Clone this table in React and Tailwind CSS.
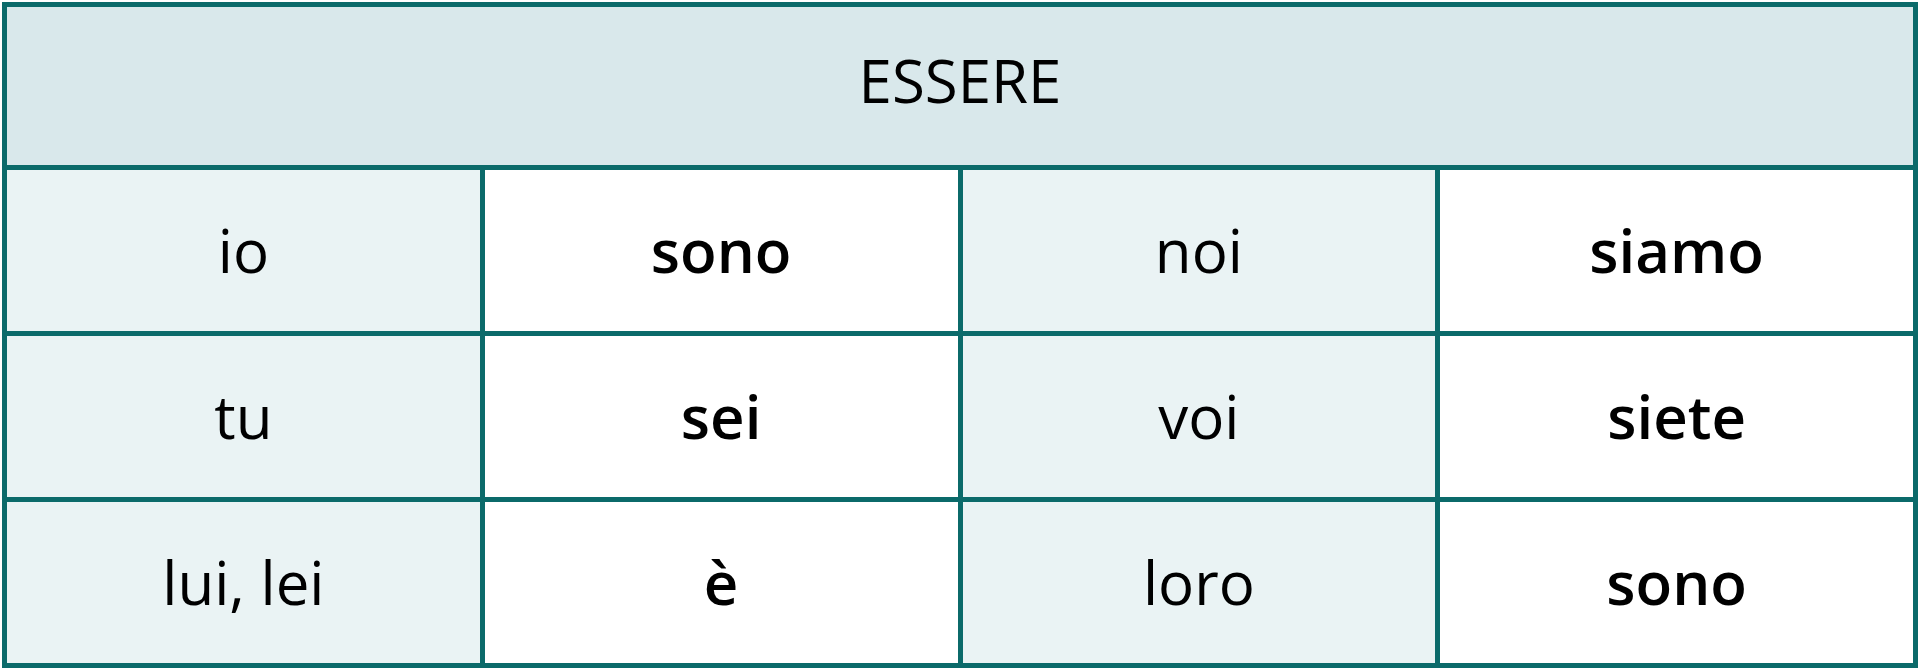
export default function App() {
  const rows = [
    ["io", "sono", "noi", "siamo"],
    ["tu", "sei", "voi", "siete"],
    ["lui, lei", "è", "loro", "sono"],
  ];
  return (
    <div className="w-[1920px] h-[670px] bg-white pt-[2px] pl-[2px]" style={{ fontFamily: '"Open Sans", "Noto Sans", sans-serif' }}>
      <table className="w-[1916px] border-collapse table-fixed text-black text-[60px] leading-none">
        <thead>
          <tr className="h-[163px]">
            <th colSpan={4} className="border-[5px] border-[#0b6a6a] text-center align-middle bg-[#d9e8eb] font-normal pb-[12px]">ESSERE</th>
          </tr>
        </thead>
        <tbody>
          {rows.map((r, i) => (
            <tr key={i} className="h-[166px]">
              <td className="border-[5px] border-[#0b6a6a] text-center align-middle bg-[#eaf3f4] pb-[2px]">{r[0]}</td>
              <td className="border-[5px] border-[#0b6a6a] text-center align-middle bg-white font-semibold pb-[2px]">{r[1]}</td>
              <td className="border-[5px] border-[#0b6a6a] text-center align-middle bg-[#eaf3f4] pb-[2px]">{r[2]}</td>
              <td className="border-[5px] border-[#0b6a6a] text-center align-middle bg-white font-semibold pb-[2px]">{r[3]}</td>
            </tr>
          ))}
        </tbody>
      </table>
    </div>
  );
}
